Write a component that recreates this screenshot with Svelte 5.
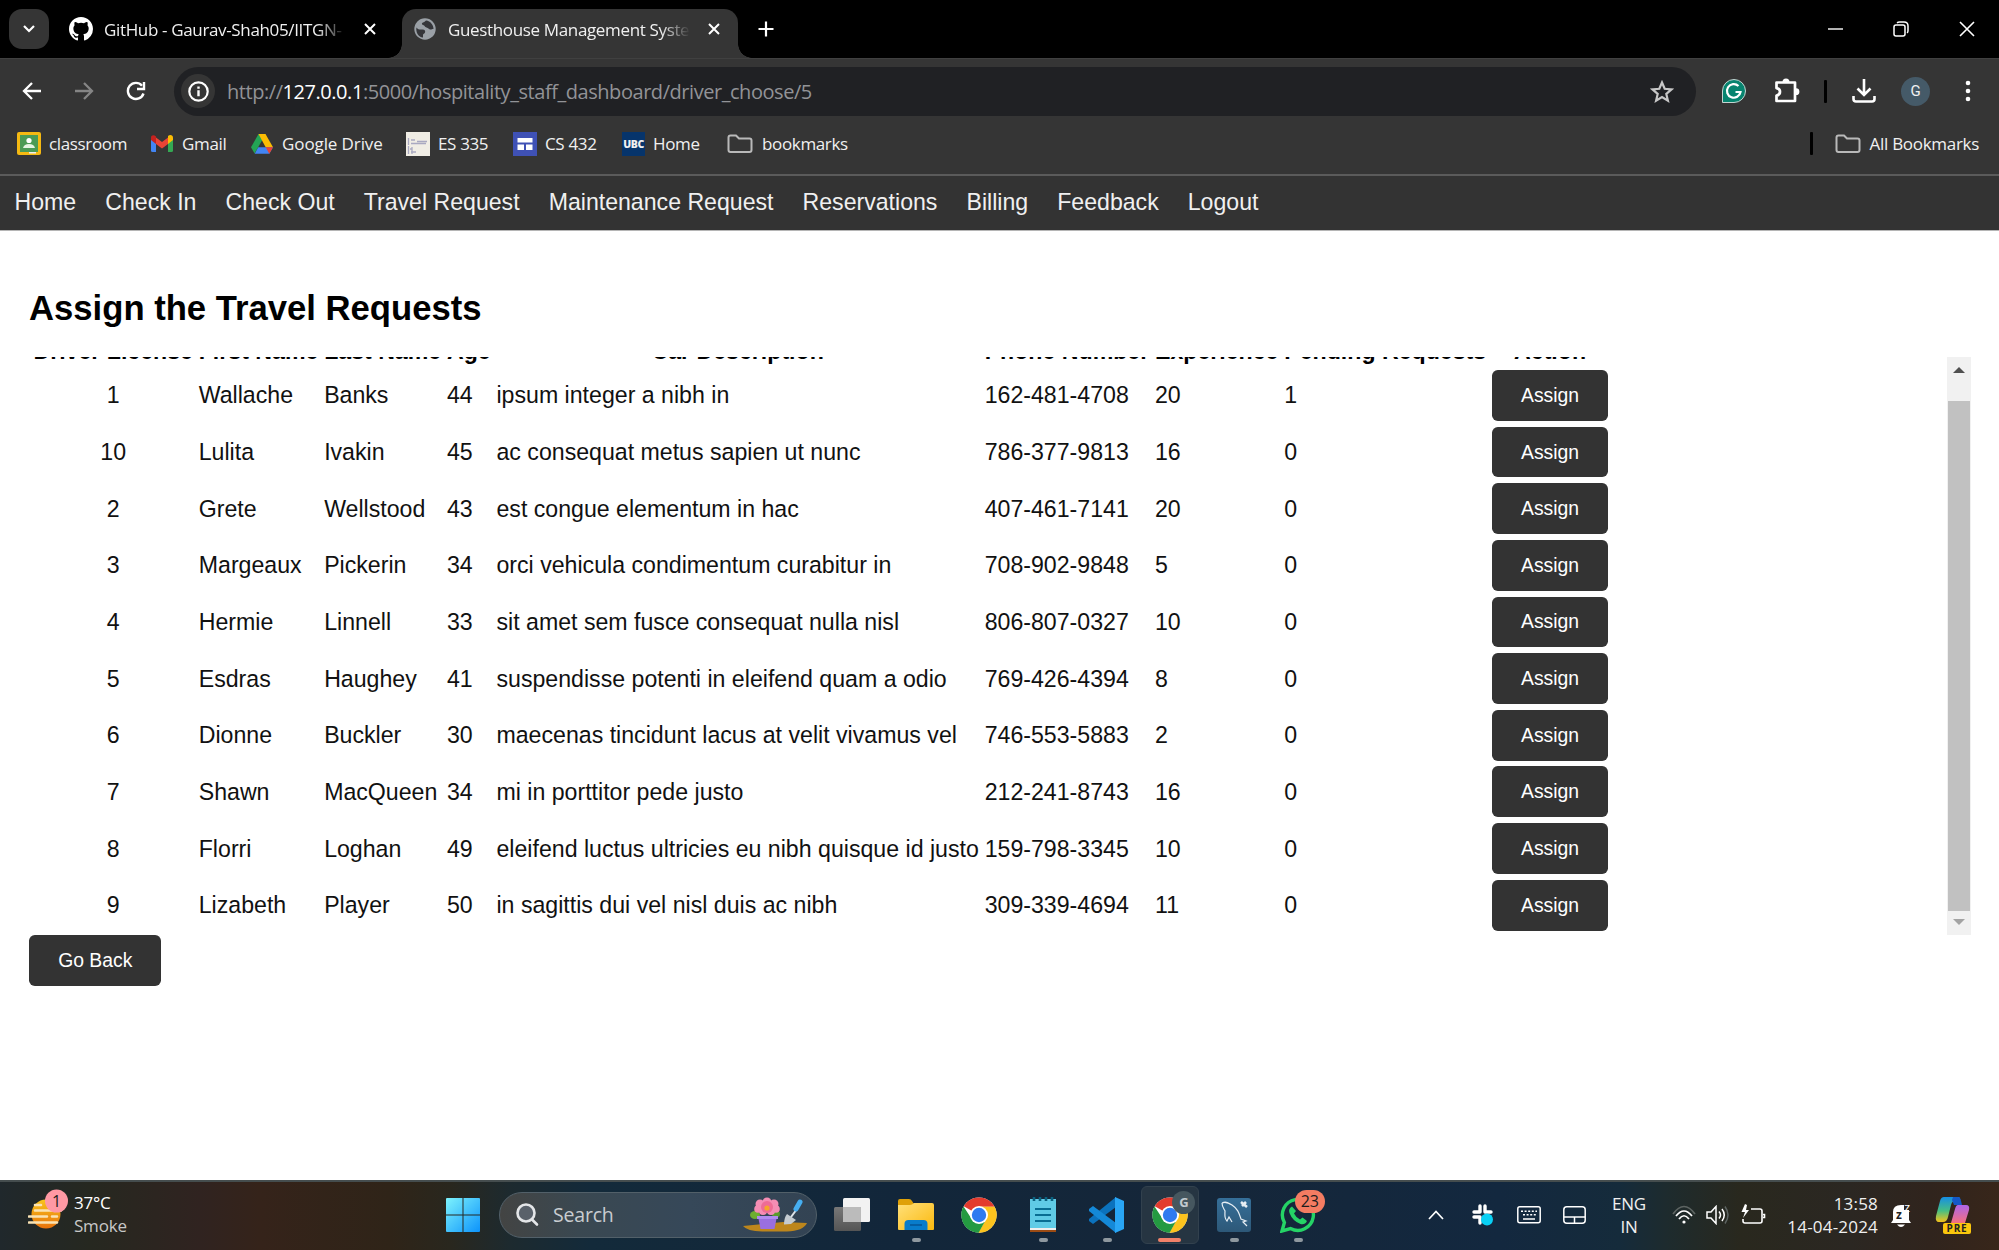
<script>
  const links = ['Home', 'Check In', 'Check Out', 'Travel Request', 'Maintenance Request', 'Reservations', 'Billing', 'Feedback', 'Logout'];
  const headers = ['Driver License', 'First Name', 'Last Name', 'Age', 'Car Description', 'Phone Number', 'Experience', 'Pending Requests', 'Action'];
  const drivers = [
    ['1', 'Wallache', 'Banks', '44', 'ipsum integer a nibh in', '162-481-4708', '20', '1'],
    ['10', 'Lulita', 'Ivakin', '45', 'ac consequat metus sapien ut nunc', '786-377-9813', '16', '0'],
    ['2', 'Grete', 'Wellstood', '43', 'est congue elementum in hac', '407-461-7141', '20', '0'],
    ['3', 'Margeaux', 'Pickerin', '34', 'orci vehicula condimentum curabitur in', '708-902-9848', '5', '0'],
    ['4', 'Hermie', 'Linnell', '33', 'sit amet sem fusce consequat nulla nisl', '806-807-0327', '10', '0'],
    ['5', 'Esdras', 'Haughey', '41', 'suspendisse potenti in eleifend quam a odio', '769-426-4394', '8', '0'],
    ['6', 'Dionne', 'Buckler', '30', 'maecenas tincidunt lacus at velit vivamus vel', '746-553-5883', '2', '0'],
    ['7', 'Shawn', 'MacQueen', '34', 'mi in porttitor pede justo', '212-241-8743', '16', '0'],
    ['8', 'Florri', 'Loghan', '49', 'eleifend luctus ultricies eu nibh quisque id justo', '159-798-3345', '10', '0'],
    ['9', 'Lizabeth', 'Player', '50', 'in sagittis dui vel nisl duis ac nibh', '309-339-4694', '11', '0']
  ];
</script>

{#snippet folder()}
  <svg width="26" height="20" viewBox="0 0 26 20" fill="none" stroke="#b9b9b9" stroke-width="2"><path d="M1.5 3.5q0-2 2-2H9l3 3h10.500q2 0 2 2V16q0 2-2 2h-19q-2 0-2-2z" /></svg>
{/snippet}

{#snippet closeMark()}
  <svg width="12" height="12" viewBox="0 0 12 12" stroke="#fff" stroke-width="2"><path d="M1 1l10 10M11 1L1 11" /></svg>
{/snippet}

{#snippet chrome()}
  <svg width="36" height="36" viewBox="0 0 48 48">
    <circle cx="24" cy="24" r="23.500" fill="#fff" />
    <path d="M24 24L3.700 12.200A23.500 23.500 0 0 1 44.300 12.200L44.300 13H24z" fill="#e33b2e" />
    <path d="M24 13H44.800A23.500 23.500 0 0 1 23 47.500L33.500 29.500z" fill="#fcc31e" />
    <path d="M3.400 12.500A23.500 23.500 0 0 0 23.500 47.500L33.500 29.500H14.500z" fill="#249a41" />
    <circle cx="24" cy="24" r="12" fill="#fff" /><circle cx="24" cy="24" r="9.600" fill="#2f7af0" />
  </svg>
{/snippet}

<div class="screen">
  <header class="tabs">
    <div class="menu"><svg width="12" height="8" viewBox="0 0 12 8" fill="none" stroke="#fff" stroke-width="2.200"><path d="M1 1l5 5 5-5" /></svg></div>
    <div class="tab idle">
      <svg class="fav" width="24" height="24" viewBox="0 0 16 16" fill="#fff"><path d="M8 0C3.580 0 0 3.580 0 8c0 3.540 2.290 6.530 5.470 7.590.4.070.55-.17.55-.38 0-.19-.01-.82-.01-1.490-2.010.37-2.530-.49-2.690-.94-.09-.23-.48-.94-.82-1.130-.28-.15-.68-.52-.01-.53.63-.01 1.080.58 1.230.82.72 1.210 1.870.87 2.330.66.07-.52.28-.87.51-1.070-1.780-.2-3.640-.89-3.640-3.950 0-.87.31-1.590.82-2.150-.08-.2-.36-1.020.08-2.120 0 0 .67-.21 2.200.82a7.400 7.400 0 0 1 4 0c1.530-1.040 2.200-.82 2.200-.82.44 1.100.16 1.920.08 2.120.51.56.82 1.270.82 2.150 0 3.070-1.870 3.750-3.650 3.950.29.25.54.73.54 1.480 0 1.070-.01 1.930-.01 2.200 0 .21.15.46.55.38A8 8 0 0 0 16 8c0-4.420-3.580-8-8-8z" /></svg>
      <span class="title first">GitHub - Gaurav-Shah05/IITGN-</span>
      {@render closeMark()}
    </div>
    <div class="tab active">
      <svg class="fav" width="22" height="22" viewBox="0 0 22 22"><circle cx="11" cy="11" r="10.700" fill="#9aa0a6" /><path d="M2.500 9.500c1.500 2.500 4 2 6 2 2.500 0 3 1.500 2.500 3-.3 1.200-2 1-2 2.500v2.500c-4.500-.5-7.500-5-6.500-10zM12 2.500c-1 .5-1 1.500-3 2-1.500.5-1.500 2 0 2.500 2 .5 1.500 2 3.500 2.500s2 1.500 3.500 2 2.500-1 3.500-.5c0-4-3-8-7.500-8.500z" fill="#35363a" /></svg>
      <span class="title">Guesthouse Management System</span>
      {@render closeMark()}
    </div>
    <svg class="plus" width="16" height="16" viewBox="0 0 16 16" stroke="#fff" stroke-width="2.200"><path d="M8 .5v15M.5 8h15" /></svg>
    <div class="window">
      <svg width="15" height="16" viewBox="0 0 15 16" stroke="#fff" stroke-width="1.400"><path d="M0 8h15" /></svg>
      <svg width="16" height="16" viewBox="0 0 16 16" fill="none" stroke="#fff" stroke-width="1.500"><rect x="1" y="4" width="11" height="11" rx="2" /><path d="M4 1.800Q5 1 6.500 1H11q4 0 4 4v4.500q0 1.500-.8 2.500" /></svg>
      <svg width="16" height="16" viewBox="0 0 16 16" stroke="#fff" stroke-width="1.600"><path d="M1 1l14 14M15 1L1 15" /></svg>
    </div>
  </header>

  <div class="toolbar">
    <div class="navs">
      <svg width="20" height="20" viewBox="0 0 20 20" fill="none" stroke="#fff" stroke-width="2.300"><path d="M19 10H2M10 2l-8 8 8 8" /></svg>
      <svg width="20" height="20" viewBox="0 0 20 20" fill="none" stroke="#858585" stroke-width="2.300"><path d="M1 10h17M10 2l8 8-8 8" /></svg>
      <svg width="20" height="20" viewBox="0 0 20 20" fill="none" stroke="#fff" stroke-width="2.400"><path d="M17.500 12.500A8 8 0 1 1 16 4.700" /><path d="M18 1v7h-7" /></svg>
    </div>
    <div class="url">
      <span class="info"><svg width="21" height="21" viewBox="0 0 21 21"><circle cx="10.500" cy="10.500" r="9.200" fill="none" stroke="#fff" stroke-width="2.200" /><path d="M9.300 9.300h2.400v6H9.300zM9.300 5.500h2.400v2.300H9.300z" fill="#fff" /></svg></span>
      <span class="address">http://<b>127.0.0.1</b>:5000/hospitality_staff_dashboard/driver_choose/5</span>
      <svg width="24" height="23" viewBox="0 0 24 23" fill="none" stroke="#c7c7c7" stroke-width="2.200"><path d="M12 2.500l2.700 6.300 6.800.6-5.200 4.500 1.600 6.700-5.900-3.600-5.900 3.600 1.600-6.700-5.200-4.500 6.800-.6z" /></svg>
    </div>
    <div class="tools">
      <svg class="t-gram" width="24" height="24" viewBox="0 0 24 24"><path d="M.5 23.500V12A11.500 11.500 0 1 1 12 23.500z" fill="#07846f" stroke="#c5d5d2" /><path d="M16.500 7A6.800 6.800 0 1 0 18.500 13H13.500" fill="none" stroke="#fff" stroke-width="2.200" /></svg>
      <svg class="t-ext" width="26" height="26" viewBox="0 0 26 26"><path d="M3 5h18v5.500q3 0 3 3t-3 3V23H3v-6q3.500 0 3.500-3.500T3 10z" fill="none" stroke="none" /><path d="M2.500 4.500h18.500V23H2.500v-5.500q3.500-.5 3.500-3.700t-3.500-3.700z" fill="none" stroke="#fff" stroke-width="2.700" stroke-linejoin="round" /><path d="M8.500 4a3.500 3.500 0 0 1 7 0zM22 10.300a3.400 3.400 0 0 1 0 6.800z" fill="#fff" /></svg>
      <i class="bar"></i>
      <svg class="t-down" width="24" height="24" viewBox="0 0 24 24" fill="none" stroke="#fff" stroke-width="2.600"><path d="M12 0v16M5.500 9.500L12 16l6.500-6.500M1.500 17v3q0 2.500 2.500 2.500h16q2.500 0 2.500-2.500v-3" /></svg>
      <span class="avatar">G</span>
      <svg class="t-dots" width="6" height="22" viewBox="0 0 6 22" fill="#fff"><circle cx="3" cy="3" r="2.300" /><circle cx="3" cy="11" r="2.300" /><circle cx="3" cy="19" r="2.300" /></svg>
    </div>
  </div>

  <div class="bookmarks">
    <span class="bm w1"><svg width="24" height="23" viewBox="0 0 24 23"><rect width="24" height="23" rx="2" fill="#f5b912" /><rect x="3" y="3" width="18" height="17" fill="#4b9b55" /><circle cx="12" cy="8.500" r="2.600" fill="#fff" /><path d="M6 16q1-4 6-4t6 4z" fill="#e5f4e3" /><path d="M12 20h7v1.500h-7z" fill="#eee" /></svg><span class="lbl">classroom</span></span>
    <span class="bm w2"><svg width="22" height="17" viewBox="0 0 22 17"><path d="M0 3v12.500Q0 17 1.500 17H5V7z" fill="#4285f4" /><path d="M22 3v12.500q0 1.500-1.500 1.500H17V7z" fill="#34a853" /><path d="M17 2.500V9l5-4V2.500C22 0 19-.7 17 1z" fill="#fbbc04" /><path d="M5 2.500V9l6 4.500L17 9V2.500L11 7z" fill="#ea4335" /><path d="M0 2.500V5l5 4V1.500C3-.7 0 0 0 2.500z" fill="#c5221f" /></svg><span class="lbl">Gmail</span></span>
    <span class="bm w3"><svg width="22" height="20" viewBox="0 0 22 20"><path d="M7.500 0h7L11 6.500 3.600 19.500 0 13.300z" fill="#23a455" /><path d="M7.500 0h7L22 13.300h-7.300z" fill="#fbbc04" /><path d="M7.300 13.300H22l-3.700 6.500H3.700z" fill="#4285f4" /><path d="M14.700 13.300H22l-3.700 6.500z" fill="#ea4335" /></svg><span class="lbl wide">Google Drive</span></span>
    <span class="bm w4"><svg width="24" height="24" viewBox="0 0 24 24"><path fill="#f0ede5" d="M0 0h24v24H0z" /><path d="M2.500 6v7M2.500 14v8M5 8h4M11 9.500h10M5 11.500h15M4 17h2M5 20h5M6 22v-7" stroke="#a9a9c1" stroke-width="1.300" /></svg><span class="lbl">ES 335</span></span>
    <span class="bm w5"><svg width="24" height="24" viewBox="0 0 24 24"><path fill="#3f51b5" d="M0 0h24v24H0z" /><path fill="#fff" d="M4.500 6h15v4.500h-15zM4.500 12.500h6.500V18H4.500zM13 12.500h6.500V18H13z" /></svg><span class="lbl">CS 432</span></span>
    <span class="bm w6"><span class="ubc">UBC</span><span class="lbl">Home</span></span>
    <span class="bm w7">{@render folder()}<span class="lbl">bookmarks</span></span>
    <span class="bm all"><i class="bar"></i>{@render folder()}<span class="lbl">All Bookmarks</span></span>
  </div>

  <nav class="site">
    {#each links as link}<span>{link}</span>{/each}
  </nav>

  <main>
    <h2>Assign the Travel Requests</h2>
    <div class="pane">
      <div class="scroll">
        <table>
          <thead><tr>{#each headers as h}<th>{h}</th>{/each}</tr></thead>
          <tbody>
            {#each drivers as row}
              <tr>
                {#each row as cell}<td>{cell}</td>{/each}
                <td><button>Assign</button></td>
              </tr>
            {/each}
          </tbody>
        </table>
      </div>
      <div class="scrollbar">
        <svg width="12" height="6" viewBox="0 0 12 6"><path d="M0 6l6-6 6 6z" fill="#505050" /></svg>
        <i class="thumb"></i>
        <svg width="12" height="6" viewBox="0 0 12 6"><path d="M0 0l6 6 6-6z" fill="#a3a3a3" /></svg>
      </div>
    </div>
    <button class="back">Go Back</button>
  </main>

  <footer class="taskbar">
    <div class="weather">
      <svg width="42" height="42" viewBox="0 0 42 42">
        <defs><linearGradient id="sun" x2="0" y2="1"><stop stop-color="#f8c51c" /><stop offset="1" stop-color="#e8720c" /></linearGradient></defs>
        <circle cx="18" cy="25" r="14.500" fill="url(#sun)" />
        <path d="M7 16h6M7 21.500h26M1 27.500h18M24 27.500h5M1 33.500h28" stroke="#fae3b4" stroke-width="2.600" stroke-linecap="round" />
        <circle cx="28.500" cy="12" r="11.500" fill="#ff99a4" /><text x="28.500" y="17.500" text-anchor="middle" font-size="16" fill="#222">1</text>
      </svg>
      <span class="temp"><b>37°C</b><span>Smoke</span></span>
    </div>
    <svg class="start" width="34" height="34" viewBox="0 0 34 34">
      <defs><linearGradient id="win" x2="1" y2="1"><stop stop-color="#7df3fd" /><stop offset="1" stop-color="#0c93fb" /></linearGradient></defs>
      <path d="M1 0h15.500v16.500H0V1q0-1 1-1zM17.500 0H33q1 0 1 1v15.500H17.500zM0 17.500h16.500V34H1q-1 0-1-1zM17.500 17.500H34V33q0 1-1 1H17.500z" fill="url(#win)" />
    </svg>
    <div class="search">
      <svg width="23" height="24" viewBox="0 0 23 24" fill="none" stroke="#e4e6e8" stroke-width="2.600" stroke-linecap="round"><circle cx="10" cy="10" r="8.500" fill="#59616a" /><path d="M16 16.500l5 5" /></svg>
      <span>Search</span>
      <svg width="66" height="36" viewBox="0 0 66 36">
        <path d="M1 29l20-2 20-2 24 1q-4 8-20 8.500H20Q5 34 1 29z" fill="#bd861c" />
        <ellipse cx="13" cy="18" rx="5" ry="4" fill="#6eae31" /><ellipse cx="34" cy="17" rx="4" ry="3.500" fill="#5a9b2b" />
        <path d="M16 19h19l-2.500 13h-14z" fill="#9a6fe0" /><path d="M15 19h21v3H15z" fill="#b08cf0" />
        <g fill="#f58db4"><circle cx="25" cy="5" r="4.500" /><circle cx="18" cy="7" r="4.500" /><circle cx="32" cy="7" r="4.500" /><circle cx="16" cy="12" r="3.800" /><circle cx="34" cy="12" r="3.800" /><circle cx="21" cy="14" r="4" /><circle cx="29" cy="14" r="4" /></g>
        <circle cx="25" cy="10" r="6" fill="#ee6c96" /><circle cx="25" cy="11" r="2.600" fill="#f6a52b" />
        <path d="M45 17l9 6-5 4-7 .5q0-7 3-10.500z" fill="#c4cbd0" /><path d="M49 20l6-8" stroke="#dfe4e8" stroke-width="2" /><path d="M54 12l4-7" stroke="#46aef0" stroke-width="5" stroke-linecap="round" />
      </svg>
    </div>
    <div class="apps">
      <span class="app"><svg width="36" height="34" viewBox="0 0 36 34"><defs><linearGradient id="tv" x2="0" y2="1"><stop stop-color="#777" /><stop offset="1" stop-color="#555" /></linearGradient></defs><rect y="9" width="27" height="24" rx="1.500" fill="url(#tv)" /><rect x="9" y="0" width="27" height="24" rx="1.500" fill="#f2f2f2" /><path d="M9 9h18v15H9z" fill="#bbb" /></svg></span>
      <span class="app"><svg width="36" height="32" viewBox="0 0 36 32"><defs><linearGradient id="fd" x2="1" y2="1"><stop stop-color="#ffe07a" /><stop offset="1" stop-color="#fbb90e" /></linearGradient></defs><path d="M0 8V2Q0 0 2 0h9q2 0 3 2l2 3v5H0z" fill="#dfa108" /><path d="M0 6h12q2 0 4-2h18q2 0 2 2v24q0 1-1 1H1q-1 0-1-1z" fill="url(#fd)" /><path d="M6.500 31v-6q0-4 4-4h15q4 0 4 4v6z" fill="#087ccb" /><path d="M12 26h12" stroke="#055496" stroke-width="1.500" /></svg><i class="dot"></i></span>
      <span class="app">{@render chrome()}</span>
      <span class="app"><svg width="26" height="36" viewBox="0 0 26 36"><path d="M0 2h26v30H0z" fill="#60cbe6" /><path d="M0 31h26v2H0z" fill="#eee" /><path d="M0 33h26v2H0z" fill="#9b4b14" /><path d="M5 12h16M5 18h16M5 24h16" stroke="#096d92" stroke-width="2" /><path d="M4 0v4M10 0v4M16 0v4M22 0v4" stroke="#0b6280" stroke-width="2.600" /></svg><i class="dot"></i></span>
      <span class="app"><svg width="36" height="36" viewBox="0 0 36 36"><path d="M27 0v10L4 27 0 24v-2z" fill="#0b72bd" /><path d="M4 9l23 17v10L0 14v-2z" fill="#1489d8" /><path d="M26 0l9 4v28l-9 4z" fill="#29a6f5" /></svg><i class="dot"></i></span>
      <span class="app current">{@render chrome()}<em>G</em><i class="dot wide"></i></span>
      <span class="app"><svg width="34" height="34" viewBox="0 0 34 34"><defs><linearGradient id="sq" x2="0" y2="1"><stop stop-color="#356f99" /><stop offset="1" stop-color="#2d5878" /></linearGradient></defs><rect width="34" height="34" rx="3" fill="url(#sq)" /><path d="M5 5c4-2 7 0 10 2 6 4 7 8 9 14l5 2-3 1 4 4M5 5c0 4 2 6 3 8 0 4-1 7 2 10l2-4 3 5" fill="none" stroke="#e6eef4" stroke-width="1.200" /><path d="M24 4l6 5M25 8l4-4" stroke="#e6eef4" stroke-width="2.600" /></svg><i class="dot"></i></span>
      <span class="app"><svg width="36" height="36" viewBox="0 0 36 36"><path d="M2 34l2.400-8.500A15.500 15.500 0 1 1 10.500 31.500z" fill="none" stroke="#25d366" stroke-width="3.400" /><path d="M12 9.500q-4 2-2.500 6.500 3 8 11 11 4.500 1 6.500-3l-4.500-3.500-2.500 2q-4-2-6-6l2-2.500z" fill="#25d366" /></svg><em class="count">23</em><i class="dot"></i></span>
    </div>
    <div class="tray">
      <svg class="c1" width="16" height="10" viewBox="0 0 16 10" fill="none" stroke="#fff" stroke-width="1.700"><path d="M1 9l7-7.500L15 9" /></svg>
      <svg class="c2" width="22" height="22" viewBox="0 0 22 22" stroke="#fff" stroke-width="3.400" stroke-linecap="round"><path d="M8 2v6M2 8h6M13 2v6M13 8h6M2 13h6M8 13v6M13 13h5" /><circle cx="15" cy="15.500" r="6" fill="#09d0f5" stroke="none" /></svg>
      <svg class="c3" width="24" height="18" viewBox="0 0 24 18" fill="none" stroke="#fff" stroke-width="1.500"><rect x=".8" y=".8" width="22.400" height="16" rx="2" /><path d="M4 5.200h16M6 8.800h13" stroke-dasharray="2 1.600" /><path d="M6 13h12" /></svg>
      <svg class="c4" width="23" height="18" viewBox="0 0 23 18" fill="none" stroke="#fff" stroke-width="1.500"><rect x=".8" y=".8" width="21.400" height="16.400" rx="3" /><path d="M1 11h21M11.500 11v6" /></svg>
      <span class="lang"><span>ENG</span><span>IN</span></span>
      <svg class="c5" width="24" height="20" viewBox="0 0 24 20" fill="none" stroke="#fff" stroke-width="1.700"><path d="M1 9q11-15 22 0" stroke="#5d6462" /><path d="M4 11q8-10 16 0M7 14q5-6.500 10 0" /><circle cx="12" cy="17" r="1.600" fill="#fff" stroke="none" /></svg>
      <svg class="c6" width="24" height="20" viewBox="0 0 24 20" fill="none" stroke="#fff" stroke-width="1.500"><path d="M1 7h4l5-5.500v17L5 13H1z" /><path d="M13 6.500q3 3.500 0 7M16 4q4.500 6 0 12" /><path d="M19 1.500q6 8.500 0 17" stroke="#5d6462" /></svg>
      <svg class="c7" width="25" height="22" viewBox="0 0 25 22" fill="none" stroke="#fff" stroke-width="1.600"><path d="M10 5h9q2 0 2 2v10q0 2-2 2H4q-2 0-2-2v-2M22 10.500h1.500v3H22" /><path d="M4 0L.5 8H4l-2 6 6-8H5l1-5z" fill="#fff" stroke="none" /></svg>
      <span class="clock"><span>13:58</span><span>14-04-2024</span></span>
      <svg class="c8" width="22" height="26" viewBox="0 0 22 26"><path d="M1 21l2-3v-8q0-7 8-7h3v5h5v10l2 3zM7 22.500h8q-4 5-8 0z" fill="#fff" /><text x="6" y="17" font-size="12" font-weight="700" fill="#222">z</text><text x="14" y="10" font-size="13" fill="#fff">z</text></svg>
      <svg class="c9" width="36" height="38" viewBox="0 0 36 38">
        <defs><linearGradient id="ca" x2="0" y2="1"><stop stop-color="#168ee5" /><stop offset=".55" stop-color="#46be83" /><stop offset="1" stop-color="#f5c319" /></linearGradient><linearGradient id="cb" x2="0" y2="1"><stop stop-color="#ad65e8" /><stop offset="1" stop-color="#f4707e" /></linearGradient></defs>
        <path d="M9 1h14q3 0 2 4l-5 0q-3 0-4 4l-3 12q-1 5-5 5H4q-4 0-3-6L5 5q1-4 4-4z" fill="url(#ca)" /><path d="M18 1h5q2 0 3 4l1 4h-8l-2-5z" fill="#1458c7" />
        <path d="M23 9h8q4 0 3 5l-4 13H16l4-14q1-4 3-4z" fill="url(#cb)" />
        <rect x="8" y="27" width="28" height="11" rx="2" fill="#fbc70d" /><text x="22" y="36.200" text-anchor="middle" font-size="10" font-weight="700" fill="#222" letter-spacing=".8">PRE</text>
      </svg>
    </div>
  </footer>
</div>

<style>
  :global(body) { margin: 0; background: #fff; overflow: hidden; }
  .screen { --u: 1.4535px; width: 1999px; height: 1250px; display: flex; flex-direction: column; font-family: "Open Sans", "Noto Sans", sans-serif; color: #f0f0f0; }
  .screen * { box-sizing: border-box; }
  svg { display: block; flex: none; }
  i, em, b { font-style: normal; font-weight: 400; }

  .tabs { height: 58px; flex: none; background: #000; display: flex; align-items: flex-start; padding: 9px 0 0 9px; }
  .menu { width: 40px; height: 40px; border-radius: 13px; background: #353535; display: grid; place-items: center; }
  .tab { height: 49px; padding-bottom: 9px; display: flex; align-items: center; }
  .idle { width: 353px; padding-left: 20px; }
  .active { position: relative; width: 336px; padding-left: 12px; border-radius: 14px 14px 0 0; background: #353535; }
  .active::before, .active::after { content: ""; position: absolute; bottom: 0; width: 14px; height: 14px; }
  .active::before { left: -14px; background: radial-gradient(circle at 0 0, #000 13.500px, #353535 14px); }
  .active::after { right: -14px; background: radial-gradient(circle at 100% 0, #000 13.500px, #353535 14px); }
  .title { width: 242px; margin: 0 18px 0 12px; overflow: hidden; white-space: nowrap; font-size: 17px; letter-spacing: -.35px; -webkit-mask-image: linear-gradient(90deg, #000 88%, transparent); mask-image: linear-gradient(90deg, #000 88%, transparent); }
  .title.first { margin-left: 11px; margin-right: 18px; }
  .plus { margin: 12px 0 0 20px; }
  .window { margin: 12px 24px 0 auto; display: flex; gap: 50px; }

  .toolbar { height: 64px; flex: none; display: flex; align-items: center; background: #353535; box-shadow: inset 0 1px #404040; padding-top: 2px; }
  .navs { width: 174px; display: flex; gap: 32px; padding-left: 22px; }
  .url { width: 1522px; height: 49px; border-radius: 25px; background: #202124; display: flex; align-items: center; padding: 0 22px 0 7px; }
  .info { width: 34px; height: 34px; border-radius: 50%; background: #353535; display: grid; place-items: center; margin-right: 12px; }
  .address { flex: 1; font-size: 20px; letter-spacing: -.45px; color: #929397; }
  .address b { color: #fff; }
  .tools { display: flex; align-items: center; flex: 1; padding-left: 26px; }
  .bar { width: 3px; height: 23px; background: #000; border-radius: 1px; }
  .t-ext { margin: 0 24px 0 28px; }
  .t-down { margin: 0 37px 0 25px; }
  .avatar { width: 29px; height: 29px; border-radius: 50%; background: #455a68; font: 15px "Roboto", sans-serif; display: grid; place-items: center; margin-left: -12px; }
  .t-dots { margin-left: 35px; }

  .bookmarks { height: 54px; flex: none; display: flex; align-items: center; padding: 0 20px 9px 17px; background: #353535; border-bottom: 2px solid #5b5b5b; font-size: 17px; white-space: nowrap; }
  .bm { display: flex; align-items: center; gap: 8px; letter-spacing: -.35px; }
  .lbl.wide { letter-spacing: -.1px; }
  .w1 { width: 134px; } .w2 { width: 100px; } .w3 { width: 155px; } .w4 { width: 107px; } .w5 { width: 109px; } .w6 { width: 105px; }
  .w2, .w3 { gap: 9px; }
  .w7, .all { gap: 9px; }
  .all { margin-left: auto; letter-spacing: -.3px; }
  .all .bar { margin-right: 13px; }
  .ubc { width: 23px; height: 24px; background: #06346b; display: grid; place-items: center; font: 800 10.500px "Open Sans", sans-serif; letter-spacing: -.4px; }

  .site { height: 55px; flex: none; display: flex; gap: calc(20 * var(--u)); padding: 0 calc(10 * var(--u)) 1px; align-items: center; background: #333; border-bottom: 1px solid #b5b5b5; font: 23.120px "Liberation Sans", sans-serif; }

  main { flex: 1; padding: 0 calc(20 * var(--u)); display: flex; flex-direction: column; align-items: flex-start; font-family: "Liberation Sans", sans-serif; color: #111; }
  h2 { height: 126px; margin: 0; padding-top: 57px; line-height: 40px; font-size: 34.650px; color: #000; }
  .pane { width: 1942px; height: 578px; flex: none; display: flex; }
  .scroll { flex: 1; overflow: hidden; display: flex; flex-direction: column; justify-content: flex-end; align-items: flex-start; }
  table { flex: none; border-spacing: 3px; font-size: 23.150px; white-space: nowrap; }
  td, th { padding: 1.400px; line-height: 26px; }
  td:first-child { text-align: center; }
  th { color: #000; }
  button { display: block; height: calc(35 * var(--u)); padding: 0 calc(20 * var(--u)); border: 0; border-radius: calc(4 * var(--u)); background: #333; color: #fff; font: calc(13.333 * var(--u)) "Liberation Sans", sans-serif; }
  .scrollbar { width: 24px; background: #f1f1f1; display: flex; flex-direction: column; align-items: center; padding: 10px 0; }
  .thumb { width: 22px; height: 510px; margin: 28px 0 8px; background: #c1c1c1; }

  .taskbar { height: 70px; flex: none; display: flex; align-items: center; padding-bottom: 3px; border-top: 2px solid #454d4e; background: linear-gradient(90deg, #20282c 0, #262820 90px, #302320 200px, #35231a 260px, #2f2418 390px, #29271e 450px, #1d2a2f 510px, #132a3a 590px, #12263a 900px, #152639 1200px, #13283f 1500px, #152b3b 1620px, #1e2b2d 1670px, #29281e 1740px, #2b2722 1850px, #30241d 1930px, #38261a 1999px); }
  .weather { width: 446px; padding-left: 28px; display: flex; align-items: center; gap: 4px; margin-bottom: 9px; }
  .temp { display: flex; flex-direction: column; font-size: 17px; line-height: 23px; color: #c8c8c8; letter-spacing: -.2px; padding-top: 7px; }
  .temp b { color: #fff; }
  .search { width: 318px; height: 46px; margin-left: 19px; border: 1px solid #526069; border-radius: 23px; background: linear-gradient(90deg, #434443, #3a4851 25%, #364859 60%, #334353); display: flex; align-items: center; padding: 0 8px 0 16px; }
  .search span { flex: 1; margin-left: 14px; font-size: 19.500px; letter-spacing: -.2px; color: #c9cdd1; }
  .apps { display: flex; margin-left: 3px; width: 510px; }
  .app { position: relative; width: 63.700px; height: 58px; display: grid; place-items: center; }
  .current::before { content: ""; position: absolute; inset: 0 3px; border: 1px solid #32414e; border-radius: 6px; background: #263542; }
  .current svg, .current em { position: relative; }
  .dot { position: absolute; bottom: 2px; left: 28px; width: 9px; height: 4px; border-radius: 2px; background: #8e989f; }
  .dot.wide { width: 23px; left: 20px; background: #f28169; }
  .app .count, .current em { position: absolute; display: grid; place-items: center; }
  .current em { left: 34px; top: 5px; width: 23px; height: 23px; border-radius: 50%; background: #46575f; font-size: 13px; font-weight: 700; color: #c3cbd0; }
  .app .count { left: 29px; top: 4px; width: 30px; height: 23px; border-radius: 12px; background: #f47c62; font-size: 16px; color: #1d1d1d; }
  .tray { display: flex; align-items: center; font-size: 17px; white-space: nowrap; letter-spacing: -.2px; padding-left: 98px; }
  .c2 { margin-left: 28px; } .c3 { margin-left: 23px; } .c4 { margin-left: 22px; } .c6 { margin-left: 10px; } .c7 { margin-left: 11px; }
  .lang { width: 86px; display: flex; flex-direction: column; text-align: center; line-height: 23px; }
  .clock { width: 112px; display: flex; flex-direction: column; text-align: right; line-height: 23px; letter-spacing: .2px; }
  .c8 { margin-left: 12px; } .c9 { margin-left: 23px; }
</style>
